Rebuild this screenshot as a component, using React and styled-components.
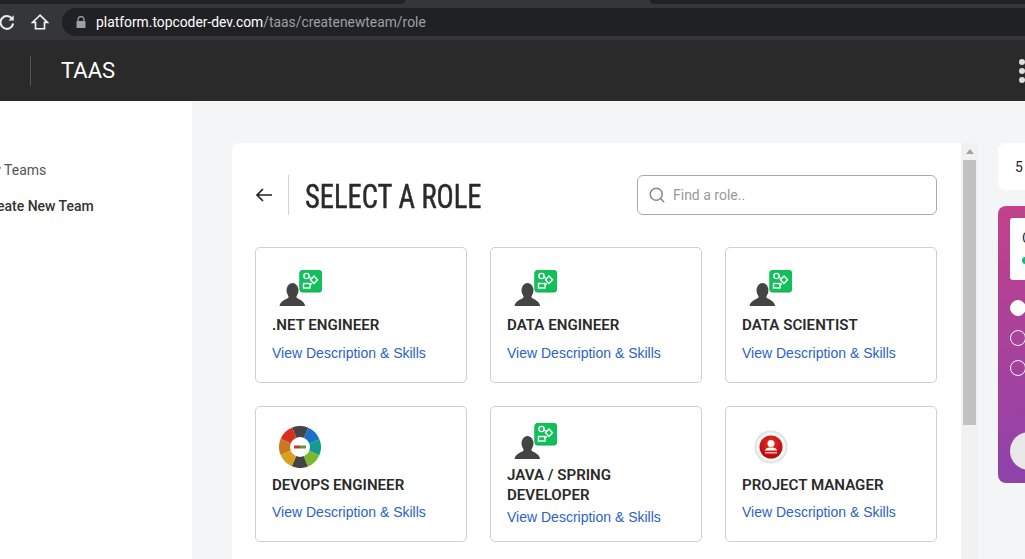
import React from "react";
import styled, { createGlobalStyle } from "styled-components";
import { Search } from "lucide-react";

const Global = createGlobalStyle`
  html, body { margin: 0; padding: 0; height: 559px; overflow: hidden; background: #f4f5f6; }
  * { box-sizing: border-box; }
  body { font-family: Roboto, "Liberation Sans", sans-serif; }
`;

const Page = styled.div`
  width: 1025px; height: 559px; overflow: hidden; display: flex; flex-direction: column;
`;
const TabStrip = styled.div`
  height: 8px; background: #35363a; display: flex; flex: none;
`;
const Tab = styled.div`
  height: 4px; background: #202124; border-bottom-right-radius: ${p => p.$left ? "0" : "6px"}; border-bottom-left-radius: ${p => p.$left ? "6px" : "0"};
  width: ${p => p.$w}px; margin-left: ${p => p.$gap}px;
`;
const Toolbar = styled.div`
  height: 32px; background: #35363a; display: flex; align-items: flex-start; flex: none; padding-left: 0;
`;
const NavIcon = styled.svg`
  width: 18px; height: 18px; margin-top: 5px; flex: none; margin-left: ${p => p.$ml}px;
`;
const Omnibox = styled.div`
  height: 28px; flex: 1; margin-left: 13px; background: #202124; border-radius: 14px 0 0 14px;
  display: flex; align-items: center; padding-left: 14px; font-size: 13.85px; white-space: nowrap;
`;
const Lock = styled.svg` width: 10px; height: 12px; margin-right: 10px; flex: none; `;
const Host = styled.span` color: #fff; `;
const Path = styled.span` color: #9aa0a6; `;

const AppHeader = styled.header`
  height: 61px; flex: none; background: #2a2a2a; display: flex; align-items: center; padding-left: 30px; position: relative;
`;
const HeaderRule = styled.div` width: 1px; height: 30px; background: #555; `;
const Brand = styled.div` color: #fff; font-size: 22px; margin-left: 30px; `;
const Dots = styled.div`
  margin-left: auto; margin-right: 0; width: 6px; display: flex; flex-direction: column; gap: 3px;
`;
const Dot = styled.span` width: 6px; height: 6px; border-radius: 50%; background: #ddd; `;

const Body = styled.div` flex: 1; display: flex; min-height: 0; `;
const Sidebar = styled.nav`
  width: 192px; flex: none; background: #fff; padding-top: 61px; display: flex; flex-direction: column; gap: 20px;
`;
const NavItem = styled.div`
  margin-left: ${p => p.$ml}px; font-size: 14px; line-height: 16px; white-space: nowrap;
  color: ${p => p.$active ? "#333" : "#555"}; font-weight: ${p => p.$active ? 500 : 400};
`;
const Main = styled.main` flex: 1; display: flex; padding: 42px 0 0 40px; gap: 20px; min-width: 0; `;
const Panel = styled.section`
  width: 746px; flex: none; display: flex; height: 460px;
`;
const Card = styled.div`
  flex: 1; min-width: 0; background: #fff; border-radius: 8px 0 0 0; padding: 32px 24px 0 23px;
`;
const Scrollbar = styled.div`
  width: 17px; flex: none; background: #f1f1f1; display: flex; flex-direction: column; align-items: center; padding-top: 6px;
`;
const ArrowUp = styled.div`
  width: 0; height: 0; border-left: 4px solid transparent; border-right: 4px solid transparent; border-bottom: 5px solid #a3a3a3;
`;
const Thumb = styled.div` width: 13px; height: 265px; margin-top: 6px; background: #c1c1c1; `;

const TitleRow = styled.div` display: flex; align-items: center; height: 40px; `;
const Back = styled.svg` width: 18px; height: 14px; flex: none; `;
const TitleRule = styled.div` width: 1px; height: 40px; background: #d4d4d4; margin: 0 16px 0 15px; `;
const Title = styled.h1`
  margin: 2px 0 0; font-family: "Liberation Sans Narrow", "Roboto Condensed", Roboto, sans-serif; font-weight: 400;
  font-size: 33px; color: #2a2a2a; white-space: nowrap; width: 176px; transform: scaleX(0.865); transform-origin: left center;
  -webkit-text-stroke: 0.5px #2a2a2a;
`;
const SearchBox = styled.div`
  margin-left: auto; width: 300px; height: 40px; border: 1px solid #aaa; border-radius: 6px; display: flex; align-items: center; padding-left: 10px; gap: 7px;
  font-size: 14px; color: #9a9a9a;
  svg { color: #8a8a8a; }
`;
const Grid = styled.div`
  margin-top: 32px; display: grid; grid-template-columns: repeat(3, 212px); column-gap: 23px; row-gap: 23px;
`;
const RoleCard = styled.div`
  height: 136px; border: 1px solid #d0d0d0; border-radius: 5px; padding: 1px 16px 0; display: flex; flex-direction: column; justify-content: center;
`;
const IconSlot = styled.div` height: ${p => p.$h}px; margin-left: 7px; flex: none; filter: blur(${p => p.$blur || 0}px); `;
const RoleName = styled.div`
  font-size: 15.1px; line-height: 20px; font-weight: 600; color: #2a2a2a; font-family: Roboto, sans-serif; margin-top: ${p => p.$mt}px;
`;
const RoleLink = styled.a`
  font-family: "Liberation Sans", Arial, sans-serif; font-size: 14px; line-height: 16px; color: #2b63c6; white-space: nowrap;
  margin-top: ${p => p.$mt}px; margin-bottom: ${p => p.$mb || 0}px;
`;

const Side = styled.aside` width: 100px; flex: none; display: flex; flex-direction: column; gap: 16px; `;
const Count = styled.div`
  height: 47px; background: #fff; border-radius: 8px; padding-left: 17px; display: flex; align-items: center; font-size: 14px; color: #2a2a2a;
`;
const Promo = styled.div`
  height: 277px; border-radius: 8px; padding: 12px; display: flex; flex-direction: column; background: linear-gradient(170deg, #c2418a 0%, #8b43ad 100%);
`;
const PromoCard = styled.div`
  height: 62px; background: #fff; border-radius: 3px; padding: 12px 0 0 12px; font-size: 14px; color: #2a2a2a; flex: none;
`;
const Online = styled.div` width: 7px; height: 7px; border-radius: 50%; background: #10b88a; margin-top: 11px; `;
const Radios = styled.div` margin-top: 20px; display: flex; flex-direction: column; gap: 14px; `;
const Radio = styled.div`
  width: 16px; height: 16px; border-radius: 50%; border: 1px solid #fff; background: ${p => p.$on ? "#fff" : "transparent"};
`;
const Puck = styled.div` width: 38px; height: 38px; border-radius: 50%; background: #e8e8e8; margin-top: 56px; `;

const SkillIcon = () => (
  <svg width="44" height="38" viewBox="0 0 44 38">
    <ellipse cx="13.5" cy="20.5" rx="6" ry="7.5" fill="#444" />
    <path d="M9.5 25h8v2.5c2 2 8 3 8.7 8.5H0.5c.7-5.5 7-6.5 9-8.5z" fill="#444" />
    <rect x="20.5" y="0" width="22.5" height="22.5" rx="3.5" fill="#0fa84c" />
    <rect x="20.5" y="0" width="22.5" height="21.5" rx="3.5" fill="#12c05a" />
    <g fill="none" stroke="#fff" strokeWidth="1.4">
      <circle cx="27.5" cy="6" r="2.6" />
      <path d="M35 6l3.5 3.700-3.500 3.700-3.500-3.700z" />
      <rect x="24.500" y="13.500" width="6.500" height="4.500" />
      <path d="M30 7l2.500 1.500M31 15l2-1.500" />
    </g>
  </svg>
);

const wheel = ["#444", "#1b6fc4", "#129c8c", "#7cb82f", "#444", "#d9a020", "#c9781f", "#d6301f"];
const WheelIcon = () => {
  const paths = wheel.map((c, i) => {
    const a = (i * 45 - 112) * Math.PI / 180, b = ((i + 1) * 45 - 112) * Math.PI / 180;
    const p = (r, t) => `${21 + r * Math.cos(t)} ${21 + r * Math.sin(t)}`;
    return <path key={c + i} fill={c} d={`M${p(21, a)}A21 21 0 0 1 ${p(21, b)}L${p(9, b)}A9 9 0 0 0 ${p(9, a)}Z`} />;
  });
  return (
    <svg width="42" height="42" viewBox="0 0 42 42">
      {paths}
      <circle cx="21" cy="21" r="10" fill="#fff" />
      <rect x="15" y="19.5" width="6" height="3" fill="#c43a30" />
      <rect x="21" y="19.5" width="6" height="3" fill="#5a9a3a" />
    </svg>
  );
};

const ManagerIcon = () => (
  <svg width="44" height="42" viewBox="0 0 44 42">
    <defs>
      <radialGradient id="red" cx="50%" cy="35%" r="65%">
        <stop offset="0%" stopColor="#f03030" />
        <stop offset="100%" stopColor="#b50505" />
      </radialGradient>
    </defs>
    <circle cx="22" cy="21" r="16.5" fill="#e2e2e2" />
    <circle cx="22" cy="21" r="14.5" fill="#f7f7f7" />
    <circle cx="22" cy="21" r="11.5" fill="url(#red)" />
    <circle cx="22" cy="17.5" r="3.5" fill="#fff" />
    <path d="M16 24.5c1-3 3.5-3 6-3s5 0 6 3z" fill="#fff" />
    <rect x="16" y="26" width="12" height="1.5" fill="#f5b0b0" />
  </svg>
);

const roles = [
  { name: ".NET ENGINEER", icon: <SkillIcon />, h: 38, mt: 7, link: 10 },
  { name: "DATA ENGINEER", icon: <SkillIcon />, h: 38, mt: 7, link: 10 },
  { name: "DATA SCIENTIST", icon: <SkillIcon />, h: 38, mt: 7, link: 10 },
  { name: "DEVOPS ENGINEER", icon: <WheelIcon />, h: 42, mt: 7, link: 9, mb: 4, blur: 0.6 },
  { name: <>JAVA / SPRING<br />DEVELOPER</>, icon: <SkillIcon />, h: 38, mt: 4, link: 4, mb: 2 },
  { name: "PROJECT MANAGER", icon: <ManagerIcon />, h: 42, mt: 7, link: 9, mb: 4, blur: 0.6 },
];

export default function App() {
  return (
    <Page>
      <Global />
      <TabStrip>
        <Tab $w={405} $gap={0} />
        <Tab $w={375} $gap={245} $left />
      </TabStrip>
      <Toolbar>
        <NavIcon $ml={-2} viewBox="0 0 24 24" fill="none" stroke="#e8eaed" strokeWidth="2.8">
          <path d="M19 8a8.5 8.5 0 1 0 1.2 6" />
          <path d="M21 3v7h-7z" fill="#e8eaed" stroke="none" />
        </NavIcon>
        <NavIcon $ml={15} viewBox="0 0 24 24" fill="none" stroke="#f1f3f4" strokeWidth="2.2">
          <path d="M12 3L2 12.5h4V21h12v-8.5h4z" />
        </NavIcon>
        <Omnibox>
          <Lock viewBox="0 0 10 12">
            <path d="M2 5V3.5a3 3 0 0 1 6 0V5" fill="none" stroke="#9aa0a6" strokeWidth="1.3" />
            <rect x="0.5" y="5" width="9" height="7" rx="1" fill="#9aa0a6" />
          </Lock>
          <Host>platform.topcoder-dev.com</Host><Path>/taas/createnewteam/role</Path>
        </Omnibox>
      </Toolbar>
      <AppHeader>
        <HeaderRule />
        <Brand>TAAS</Brand>
        <Dots><Dot /><Dot /><Dot /></Dots>
      </AppHeader>
      <Body>
        <Sidebar>
          <NavItem $ml={-18}>My Teams</NavItem>
          <NavItem $ml={-17} $active>Create New Team</NavItem>
        </Sidebar>
        <Main>
          <Panel>
            <Card>
              <TitleRow>
                <Back viewBox="0 0 18 14" fill="none" stroke="#222" strokeWidth="1.7">
                  <path d="M17 7H2M8 1L2 7l6 6" />
                </Back>
                <TitleRule />
                <Title>SELECT A ROLE</Title>
                <SearchBox><Search size={18} strokeWidth={2} />Find a role..</SearchBox>
              </TitleRow>
              <Grid>
                {roles.map((r, i) => (
                  <RoleCard key={i}>
                    <IconSlot $h={r.h} $blur={r.blur}>{r.icon}</IconSlot>
                    <RoleName $mt={r.mt}>{r.name}</RoleName>
                    <RoleLink $mt={r.link} $mb={r.mb}>View Description &amp; Skills</RoleLink>
                  </RoleCard>
                ))}
              </Grid>
            </Card>
            <Scrollbar><ArrowUp /><Thumb /></Scrollbar>
          </Panel>
          <Side>
            <Count>5</Count>
            <Promo>
              <PromoCard>C<Online /></PromoCard>
              <Radios><Radio $on /><Radio /><Radio /></Radios>
              <Puck />
            </Promo>
          </Side>
        </Main>
      </Body>
    </Page>
  );
}
